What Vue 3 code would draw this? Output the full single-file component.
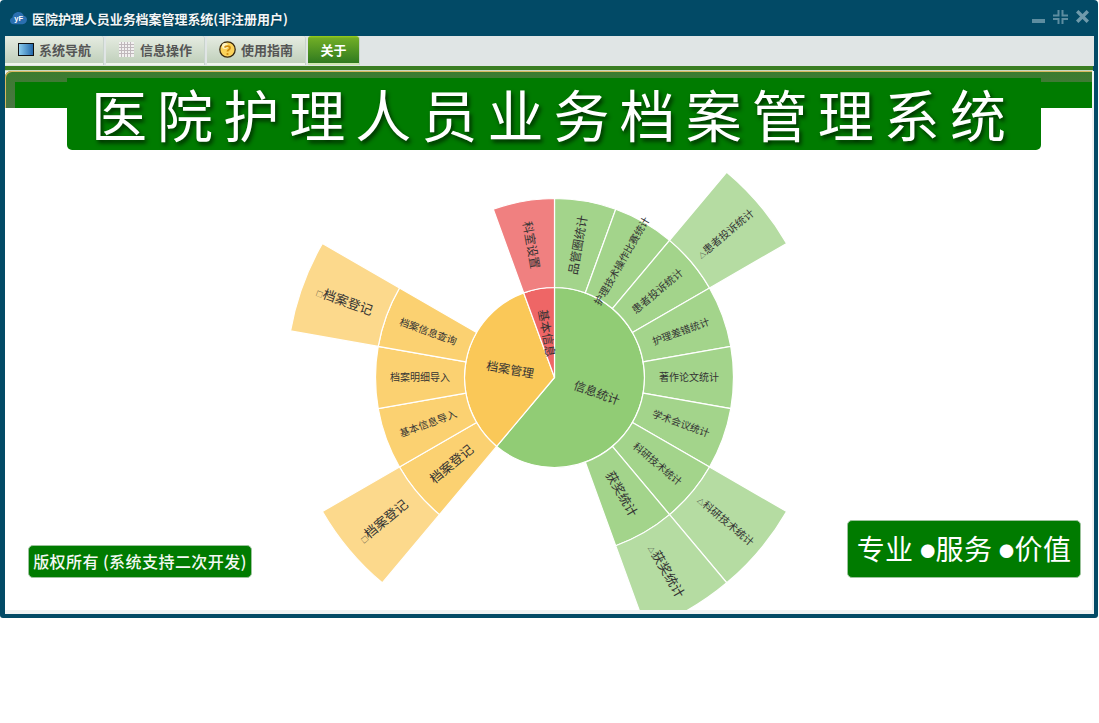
<script setup>
const C = { g: ['#91cc75', '#a3d48b', '#b5dca2'], y: ['#fac858', '#fbd171', '#fcd98c'], r: ['#ee6666', '#f08080'] }
const R = [[0, 90], [90, 179], [179, 268]]
const rows = [
  [0, 0, 220, 'g', '信息统计', 12], [0, 220, 340, 'y', '档案管理', 12], [0, 340, 360, 'r', '基本信息', 12],
  [1, 0, 20, 'g', '品管圈统计', 12], [1, 20, 40, 'g', '护理技术操作比赛统计', 10], [1, 40, 60, 'g', '患者投诉统计', 10.5],
  [1, 60, 80, 'g', '护理差错统计', 10], [1, 80, 100, 'g', '著作论文统计', 10], [1, 100, 120, 'g', '学术会议统计', 10],
  [1, 120, 140, 'g', '科研技术统计', 10], [1, 140, 160, 'g', '获奖统计', 12.5],
  [1, 220, 240, 'y', '档案登记', 13], [1, 240, 260, 'y', '基本信息导入', 10], [1, 260, 280, 'y', '档案明细导入', 10],
  [1, 280, 300, 'y', '档案信息查询', 10], [1, 340, 360, 'r', '科室设置', 12],
  [2, 40, 60, 'g', '患者投诉统计', 10.5, '△'], [2, 120, 140, 'g', '科研技术统计', 10.5, '△'], [2, 140, 160, 'g', '获奖统计', 13, '△'],
  [2, 220, 240, 'y', '档案登记', 13, '□'], [2, 280, 300, 'y', '档案登记', 13, '□']
]
const pt = (r, a) => {
  const t = (a * Math.PI) / 180
  return `${(r * Math.sin(t)).toFixed(2)} ${(-r * Math.cos(t)).toFixed(2)}`
}
const sectors = rows.map(([ring, a, b, hue, name, size, mark], i) => {
  const [r0, r1] = R[ring]
  const large = b - a > 180 ? 1 : 0
  const d = r0 === 0
    ? `M0 0L${pt(r1, a)}A${r1} ${r1} 0 ${large} 1 ${pt(r1, b)}Z`
    : `M${pt(r0, a)}L${pt(r1, a)}A${r1} ${r1} 0 ${large} 1 ${pt(r1, b)}L${pt(r0, b)}A${r0} ${r0} 0 ${large} 0 ${pt(r0, a)}Z`
  const mid = (a + b) / 2
  const rm = (r0 + r1) / 2
  const rot = mid < 180 ? mid - 90 : mid - 270
  const t = (mid * Math.PI) / 180
  return {
    id: i, d, fill: C[hue][ring], name, size, mark,
    transform: `translate(${(rm * Math.sin(t)).toFixed(2)} ${(-rm * Math.cos(t)).toFixed(2)}) rotate(${rot})`
  }
})
const tabs = [
  { name: '系统导航', icon: 'screen' },
  { name: '信息操作', icon: 'grid' },
  { name: '使用指南', icon: 'help' }
]
</script>

<template>
  <div class="window">
    <header class="titlebar">
      <svg class="logo" width="17" height="14" viewBox="0 0 18 14">
        <path d="M4 13.5C1.5 13.5 0 11.8 0 9.8 0 8 1.2 6.8 2.6 6.4 3 3 5.6.6 9 .6c2.7 0 4.8 1.6 5.6 4 2 .3 3.4 2 3.4 4 0 2.700-2 4.900-4.700 4.900z" fill="#2a6fb0" />
        <text x="4.500" y="10.500" class="logo-text">yF</text>
      </svg>
      <span class="title">医院护理人员业务档案管理系统(非注册用户)</span>
      <div class="controls">
        <svg class="c-min" width="13" height="4" viewBox="0 0 13 4"><rect width="13" height="4" fill="#5d8da0" /></svg>
        <svg class="c-max" width="15" height="14" viewBox="0 0 15 14" fill="#5d8da0">
          <path d="M4.500 0h2v6.500H0v-2h4.500zM8.500 0h2v4.500H15v2H8.500zM0 8h6.500v6h-2V10H0zM8.500 8H15v2h-4.500v4h-2z" />
        </svg>
        <svg class="c-close" width="13" height="13" viewBox="0 0 13 13"><path d="M1.200 1.200l10.600 10.600M11.800 1.200L1.200 11.800" stroke="#6f9aab" stroke-width="3.400" /></svg>
      </div>
    </header>

    <nav class="tabbar">
      <button v-for="t in tabs" :key="t.name" class="tab">
        <svg v-if="t.icon === 'screen'" width="16" height="14" viewBox="0 0 16 14">
          <defs>
            <linearGradient id="scr" x1="0" x2="1" y1="0" y2="0">
              <stop offset="0" stop-color="#8ed0f0" />
              <stop offset="1" stop-color="#1f64a8" />
            </linearGradient>
          </defs>
          <rect x=".5" y=".5" width="15" height="12" fill="url(#scr)" stroke="#111" />
        </svg>
        <svg v-else-if="t.icon === 'grid'" class="grid" width="15" height="15" viewBox="0 0 15 15">
          <rect width="15" height="15" fill="#f2f0f0" />
          <path d="M2.500 0v15M5.500 0v15M8.500 0v15M11.500 0v15M0 2.500h15M0 5.500h15M0 8.500h15M0 11.500h15" stroke="#c0b8bc" />
        </svg>
        <svg v-else class="help" width="17" height="17" viewBox="0 0 17 17">
          <circle cx="8.500" cy="8.500" r="7.700" fill="#fbd25a" stroke="#3a2a10" stroke-width="1.300" />
          <circle cx="6" cy="5" r="3" fill="#fff3c0" />
          <path d="M6 6.700C6.200 4.600 11 4.600 11 7 11 8.800 8.500 8.600 8.500 10.500" fill="none" stroke="#d08c10" stroke-width="1.900" />
          <circle cx="8.500" cy="13" r="1.100" fill="#d08c10" />
        </svg>
        <span>{{ t.name }}</span>
      </button>
      <button class="tab active"><span>关于</span></button>
    </nav>

    <div class="rule"></div>

    <main class="panel">
      <div class="band"><div class="band-fill"></div></div>
      <h1 class="banner">医院护理人员业务档案管理系统</h1>
      <div class="chart-area">
        <svg class="chart" width="1089" height="502" viewBox="0 0 1089 502">
          <g transform="translate(549.5 269.5)">
            <path v-for="s in sectors" :key="s.id" :d="s.d" :fill="s.fill" stroke="#fff" stroke-width="1.200" />
            <text v-for="s in sectors" :key="'l' + s.id" class="label" :font-size="s.size" :transform="s.transform" text-anchor="middle" dy=".36em"><tspan v-if="s.mark" font-size="7">{{ s.mark }}</tspan>{{ s.name }}</text>
          </g>
        </svg>
        <div class="copyright">版权所有 (系统支持二次开发)</div>
        <div class="slogan">专业 <span class="dot">●</span>服务 <span class="dot">●</span>价值</div>
      </div>
    </main>
  </div>
</template>

<style>
html, body { background: #fff; }
</style>

<style scoped>
* { box-sizing: border-box; }
.window {
  width: 1098px;
  height: 618px;
  background: #024a66;
  border-radius: 4px 4px 3px 3px;
  padding: 0 4px 4px 5px;
  display: flex;
  flex-direction: column;
  font-family: "Noto Sans CJK SC", "Liberation Sans", sans-serif;
  overflow: hidden;
}
.titlebar {
  height: 36px;
  flex: none;
  display: flex;
  align-items: center;
  padding-left: 5px;
  gap: 5px;
  color: #fff;
}
.logo-text { font: bold 8px "Liberation Sans", sans-serif; fill: #fff; }
.title {
  font-size: 13px;
  font-weight: 700;
  letter-spacing: -0.05px;
  color: #f2f6f8;
  text-shadow: 0 1px 1px #02303f;
}
.controls {
  margin-left: auto;
  display: flex;
  align-items: center;
  gap: 8px;
  padding-right: 5px;
  margin-top: -3px;
}
.controls svg { display: block; }
.c-min { margin-top: 8px; }
.tabbar {
  height: 30px;
  flex: none;
  background: #e0e5e5;
  display: flex;
  gap: 3px;
  padding-bottom: 1px;
}
.tab {
  width: 98px;
  height: 29px;
  border: 0;
  border-bottom: 2px solid #f0f5ec;
  border-radius: 3px 3px 0 0;
  background: linear-gradient(#e6ece2, #c0d0bb);
  box-shadow: 1px 0 0 #c9d4cc;
  padding: 0 0 0 13px;
  display: flex;
  align-items: center;
  gap: 5px;
  font: 700 13px "Noto Sans CJK SC", sans-serif;
  color: #555;
}
.tab .grid { margin-right: 1px; }
.tab .help { margin-left: -1px; }
.tab.active {
  width: 51px;
  padding: 0;
  justify-content: center;
  color: #fff;
  background: linear-gradient(#9ad016 0, #70ad26 8%, #2f7a1f 100%);
  border-bottom-color: #cfe6b0;
}
.rule {
  height: 5px;
  flex: none;
  background: #3a7d22;
  border-bottom: 1px solid #c8d8c0;
  margin-right: 1px;
}
.panel {
  flex: 1;
  position: relative;
  display: flex;
  flex-direction: column;
  background: #eef2f3;
  padding-bottom: 4px;
  min-height: 0;
}
.band {
  height: 37px;
  flex: none;
  margin-right: 2px;
  padding: 11px 0 0 10px;
  background: linear-gradient(#3a7c2e, #4a7544);
  border-radius: 6px 0 0 0;
  box-shadow: inset 1px 1px 0 #d8b860;
}
.band-fill { height: 100%; background: #007b00; }
.banner {
  position: absolute;
  z-index: 2;
  left: 62px;
  top: 7px;
  width: 974px;
  height: 72px;
  margin: 0;
  padding-left: 24px;
  background: #007b00;
  border-radius: 0 0 5px 5px;
  color: #fff;
  font-size: 56px;
  font-weight: 400;
  line-height: 70px;
  letter-spacing: 10.070px;
  white-space: nowrap;
  text-shadow: 2px 3px 4px #012b01;
}
.chart-area {
  flex: 1;
  position: relative;
  margin-right: 2px;
  background: #fff;
  overflow: hidden;
}
.chart { display: block; }
.label { fill: #333; font-family: "Noto Sans CJK SC", sans-serif; }
.copyright {
  position: absolute;
  left: 23px;
  top: 437px;
  width: 224px;
  height: 33px;
  background: #007b00;
  border: 1px solid #9cc39c;
  border-radius: 5px;
  color: #f4f8f4;
  font-size: 16px;
  font-weight: 500;
  letter-spacing: .45px;
  line-height: 30px;
  text-align: center;
  white-space: nowrap;
}
.slogan {
  position: absolute;
  left: 842px;
  top: 412px;
  width: 234px;
  height: 58px;
  background: #007b00;
  border: 1px solid #9cc39c;
  border-radius: 5px;
  color: #fff;
  font-size: 28px;
  font-weight: 400;
  letter-spacing: .4px;
  line-height: 55px;
  text-align: center;
  white-space: nowrap;
}
.dot { font-size: 15px; vertical-align: 3px; }
</style>
